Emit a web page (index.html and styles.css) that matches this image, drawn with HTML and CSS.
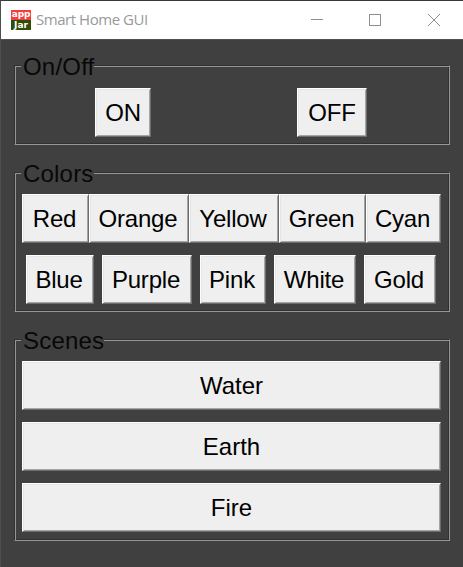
FILE: index.html
```html
<!DOCTYPE html>
<html lang="en">
<head>
<meta charset="utf-8">
<title>Smart Home GUI</title>
<link rel="stylesheet" href="styles.css">
</head>
<body>
<div class="window">
  <header class="titlebar">
    <div class="logo"><span class="logo-top">app</span><span class="logo-bottom">Jar</span></div>
    <h1 class="title">Smart Home GUI</h1>
    <svg class="controls" width="132" height="13" viewBox="0 0 132 13" fill="none" stroke="#8f8f8f" shape-rendering="crispEdges">
      <path d="M0 6.5H12"/>
      <rect x="58.5" y="1.5" width="11" height="11"/>
      <path d="M117 1L129 13M129 1L117 13" shape-rendering="auto"/>
    </svg>
  </header>
  <main class="content">
    <section class="group group-power">
      <h2 class="legend"><span class="caption">On/Off</span></h2>
      <div class="row power">
        <button class="btn on">ON</button>
        <button class="btn off">OFF</button>
      </div>
    </section>
    <section class="group group-colors">
      <h2 class="legend"><span class="caption">Colors</span></h2>
      <div class="row colors-a">
        <button class="btn">Red</button>
        <button class="btn">Orange</button>
        <button class="btn">Yellow</button>
        <button class="btn">Green</button>
        <button class="btn">Cyan</button>
      </div>
      <div class="row colors-b">
        <button class="btn">Blue</button>
        <button class="btn">Purple</button>
        <button class="btn">Pink</button>
        <button class="btn">White</button>
        <button class="btn">Gold</button>
      </div>
    </section>
    <section class="group group-scenes">
      <h2 class="legend"><span class="caption">Scenes</span></h2>
      <div class="scenes">
        <button class="btn">Water</button>
        <button class="btn">Earth</button>
        <button class="btn">Fire</button>
      </div>
    </section>
  </main>
</div>
</body>
</html>
```
FILE: styles.css
```css
* { box-sizing: border-box; }
body { margin: 0; background: #404040; font-family: "Liberation Sans", Arial, sans-serif; }
h1, h2 { margin: 0; font-weight: 400; }
.window {
  width: 463px;
  height: 567px;
  overflow: hidden;
  border-top: 1px solid #3b393b;
  border-left: 1px solid #4e4e4e;
  background: #404040;
}
.titlebar {
  display: flex;
  align-items: center;
  height: 38px;
  padding-left: 10px;
  background: #fff;
}
.logo {
  display: flex;
  flex-direction: column;
  width: 20px;
  height: 20px;
  color: #fff;
  font: 700 9px/10px "DejaVu Sans", sans-serif;
  text-align: center;
}
.logo span { height: 10px; }
.logo-top { background: #f83c3c; line-height: 8px; letter-spacing: -0.2px; }
.logo-bottom { background: #2f4d08; }
.title {
  width: 124px;
  margin: -2px 0 0 5px;
  color: #999;
  font: 400 15px/20px "Open Sans", sans-serif;
  letter-spacing: -0.46px;
  white-space: nowrap;
}
.controls { margin-left: 151px; margin-top: -1px; }
.content {
  display: flex;
  flex-direction: column;
  gap: 27px;
  height: 528px;
  padding: 25px 12px 0 13px;
  border-top: 1px solid #505050;
}
.group {
  width: 436px;
  border: 1px solid;
  border-color: #303030 #959595 #959595 #303030;
  box-shadow: inset 1px 1px #959595, inset -1px -1px #303030;
}
.group-power { height: 80px; }
.group-colors { height: 140px; }
.group-scenes { height: 202px; }
.legend {
  display: flex;
  align-items: flex-start;
  height: 20px;
  padding-left: 6px;
  font-size: 24px;
  line-height: 28px;
}
.caption {
  height: 28px;
  margin-top: -13px;
  padding: 0 0 0 2px;
  background: #404040;
  color: #080808;
  letter-spacing: 0.2px;
}
.row { display: flex; }
.btn {
  height: 49px;
  padding: 0;
  border: 1px solid;
  border-color: #fff #6c6c6c #6c6c6c #fff;
  border-radius: 0;
  background: #efefef;
  box-shadow: inset 1px 1px #e5e5e5, inset -1px -1px #a5a5a5;
  color: #000;
  font: 24px/46px "Liberation Sans", Arial, sans-serif;
  letter-spacing: -0.2px;
  text-align: center;
}
.power { padding: 2px 0 0 80px; }
.on { width: 56px; }
.off { width: 70px; margin-left: 146px; }
.colors-a { display: grid; grid-template-columns: 67px 100px 90px 87px 75px; padding: 1px 0 0 7px; }
.colors-b { display: grid; grid-template-columns: 68px 90px 66px 82px 72px; column-gap: 8px; padding: 12px 0 0 11px; }
.group-colors .btn { padding-right: 2px; }
.scenes { display: grid; row-gap: 12px; width: 426px; padding: 1px 0 0 7px; }
.scenes .btn { letter-spacing: 0; }
```
